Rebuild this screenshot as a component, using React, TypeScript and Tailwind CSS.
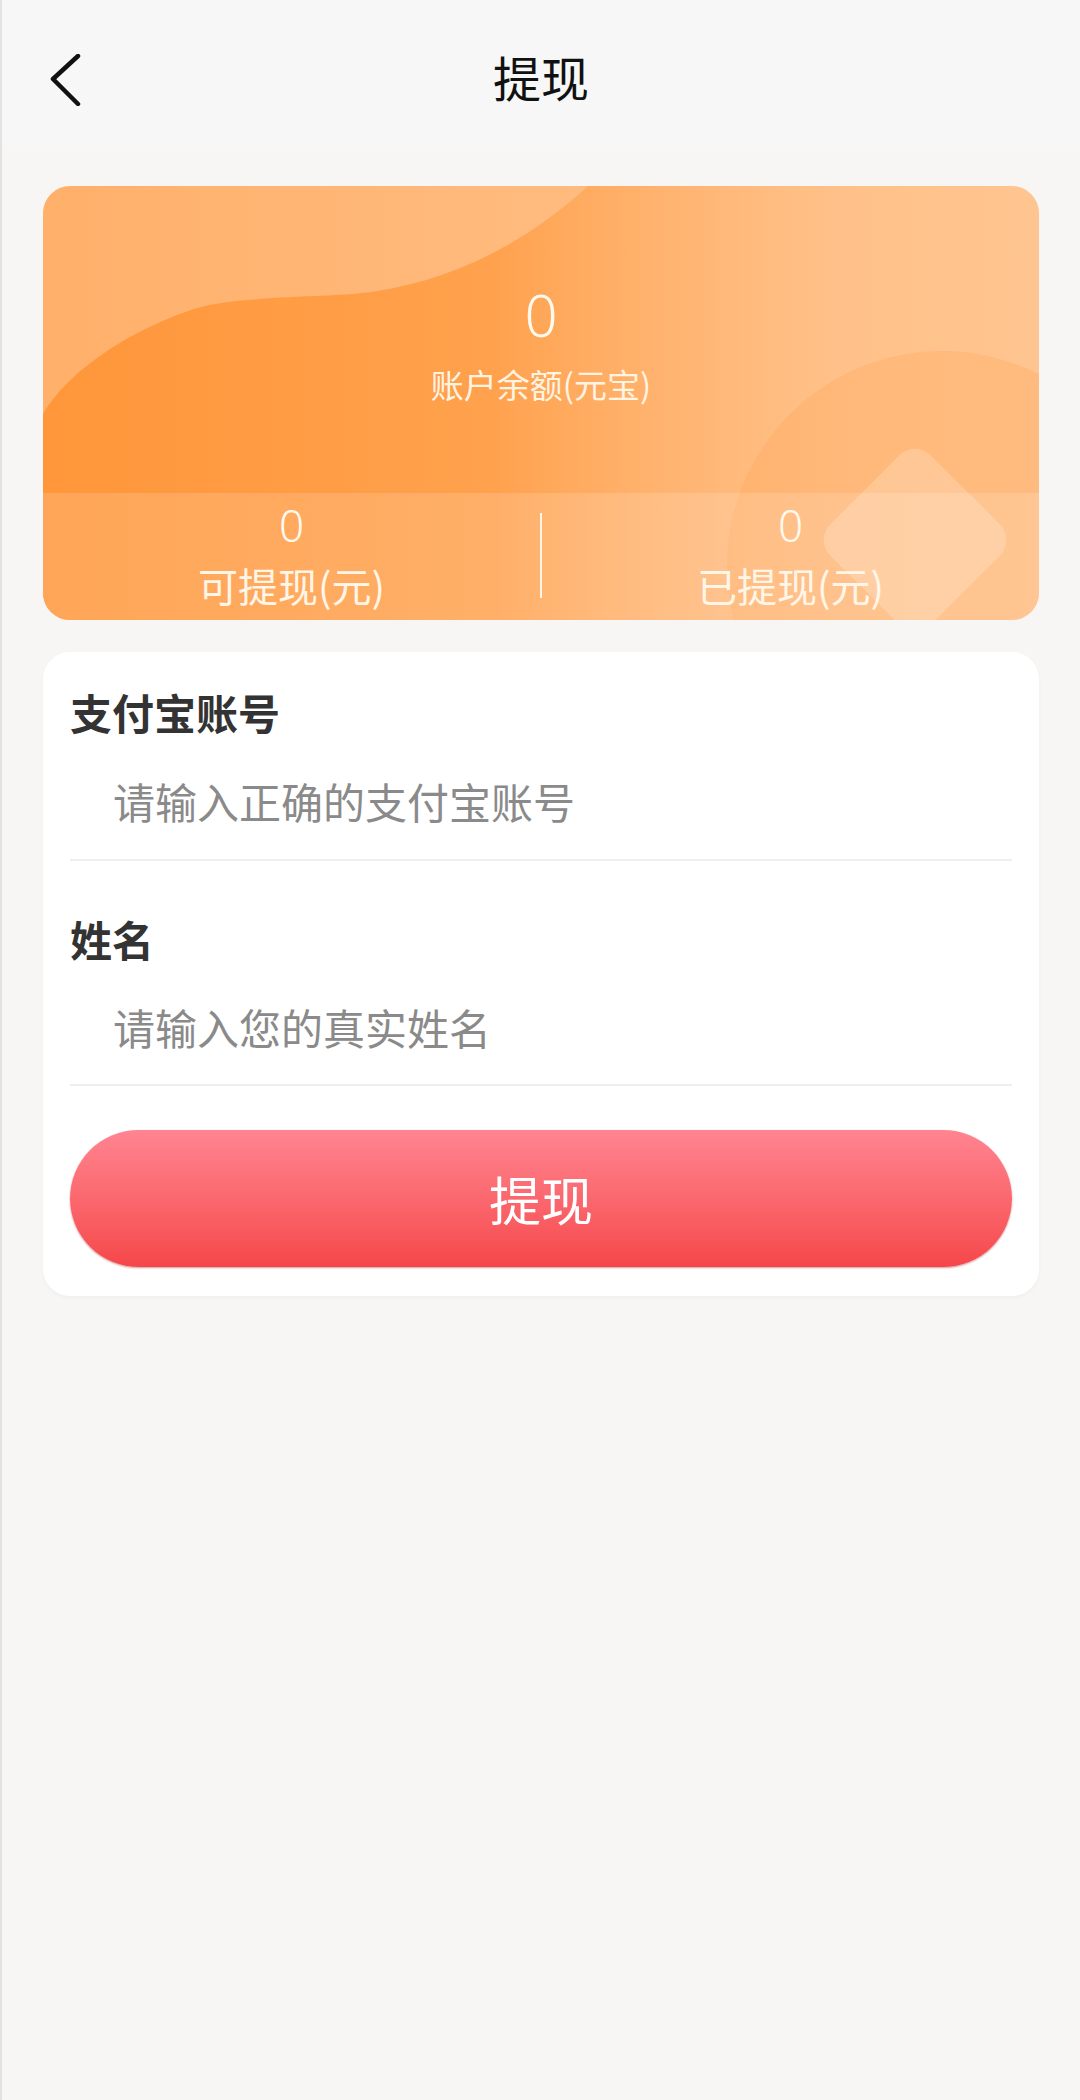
import { useState } from "react"

const cjk = "font-['Noto_Sans_CJK_SC','Noto_Sans',sans-serif]"

function BalanceCard() {
  return (
    <div className="relative h-[434px] overflow-hidden rounded-[27px] bg-gradient-to-r from-[#ffb06a] to-[#ffc590]">
      {/* decorative blob, circle, diamond */}
      <svg className="absolute inset-0" width="998" height="434" viewBox="0 0 998 434">
        <defs>
          <linearGradient id="blob" x1="0" y1="0" x2="1" y2="0">
            <stop offset="0" stopColor="#ff963a" stopOpacity="1" />
            <stop offset="0.45" stopColor="#ff9d45" stopOpacity="0.85" />
            <stop offset="0.8" stopColor="#ffb06a" stopOpacity="0" />
          </linearGradient>
        </defs>
        <path
          d="M545 0 C480 60 400 100 310 108 C240 112 180 112 145 125 C75 150 22 190 0 228 L0 434 L998 434 L998 0 Z"
          fill="url(#blob)"
        />
        <circle cx="899" cy="380" r="215" fill="#ff9a45" opacity="0.22" />
        <rect x="801" y="283" width="142" height="142" rx="22" fill="#ffffff" opacity="0.2" transform="rotate(45 872 354)" />
      </svg>
      <div className="relative flex h-[307px] flex-col items-center">
        <div className="mt-[99px] h-[60px] text-[58px] font-light leading-[60px] text-[#fffaf0] font-['Noto_Sans',sans-serif]">0</div>
        <div className={`mt-[19px] h-[40px] text-[33px] leading-[40px] text-[#fff3e2] ${cjk}`}>账户余额(元宝)</div>
      </div>
      <div className="relative flex h-[127px] bg-white/15">
        <div className="flex flex-1 flex-col items-center">
          <div className="mt-[9px] h-[46px] text-[44px] font-light leading-[46px] text-[#fffaf0] font-['Noto_Sans',sans-serif]">0</div>
          <div className={`mt-[13px] h-[48px] text-[40px] leading-[48px] text-[#fff6e8] ${cjk}`}>可提现(元)</div>
        </div>
        <div className="mt-[20px] h-[85px] w-[2px] bg-[#fff6e8]" />
        <div className="flex flex-1 flex-col items-center">
          <div className="mt-[9px] h-[46px] text-[44px] font-light leading-[46px] text-[#fffaf0] font-['Noto_Sans',sans-serif]">0</div>
          <div className={`mt-[13px] h-[48px] text-[40px] leading-[48px] text-[#fff6e8] ${cjk}`}>已提现(元)</div>
        </div>
      </div>
    </div>
  )
}

export default function App() {
  const [account, setAccount] = useState("")
  const [name, setName] = useState("")

  return (
    <div className={`min-h-[2100px] w-[1080px] border-l-2 border-[#e2e2e2] bg-[#f8f5f5] ${cjk}`}>
      <div className="relative flex h-[145px] items-center justify-center bg-[#f7f7f7]">
        <svg className="absolute left-[46px] top-[54px]" width="34" height="52" viewBox="0 0 34 52">
          <path d="M30 2 L5 25 L30 50" fill="none" stroke="#111" strokeWidth="4.5" strokeLinecap="round" strokeLinejoin="round" />
        </svg>
        <h1 className="mt-[6px] text-[48px] font-normal text-[#111]">提现</h1>
      </div>

      <div className="px-[41px] pt-[41px]">
        <BalanceCard />

        <div className="mt-[32px] rounded-[27px] bg-white px-[27px] pb-[29px] pt-[30px] shadow-[0_2px_4px_rgba(0,0,0,0.03)]">
          <div className="h-[60px] text-[42px] font-bold leading-[60px] text-[#333]">支付宝账号</div>
          <div className="flex h-[119px] items-center border-b-2 border-[#efefef] pl-[43px]">
            <input
              value={account}
              onChange={(e) => setAccount(e.target.value)}
              placeholder="请输入正确的支付宝账号"
              className="w-full bg-transparent text-[42px] text-[#333] outline-none placeholder:text-[#8a8a8a]"
            />
          </div>

          <div className="mt-[48px] h-[60px] text-[42px] font-bold leading-[60px] text-[#333]">姓名</div>
          <div className="flex h-[117px] items-center border-b-2 border-[#efefef] pl-[43px]">
            <input
              value={name}
              onChange={(e) => setName(e.target.value)}
              placeholder="请输入您的真实姓名"
              className="w-full bg-transparent text-[42px] text-[#333] outline-none placeholder:text-[#8a8a8a]"
            />
          </div>

          <button className="mt-[44px] flex h-[137px] w-full items-center justify-center rounded-full bg-gradient-to-b from-[#ff8491] to-[#f5464a] text-[52px] text-white shadow-[0_1px_2px_rgba(150,30,30,0.45)]">
            提现
          </button>
        </div>
      </div>
    </div>
  )
}
